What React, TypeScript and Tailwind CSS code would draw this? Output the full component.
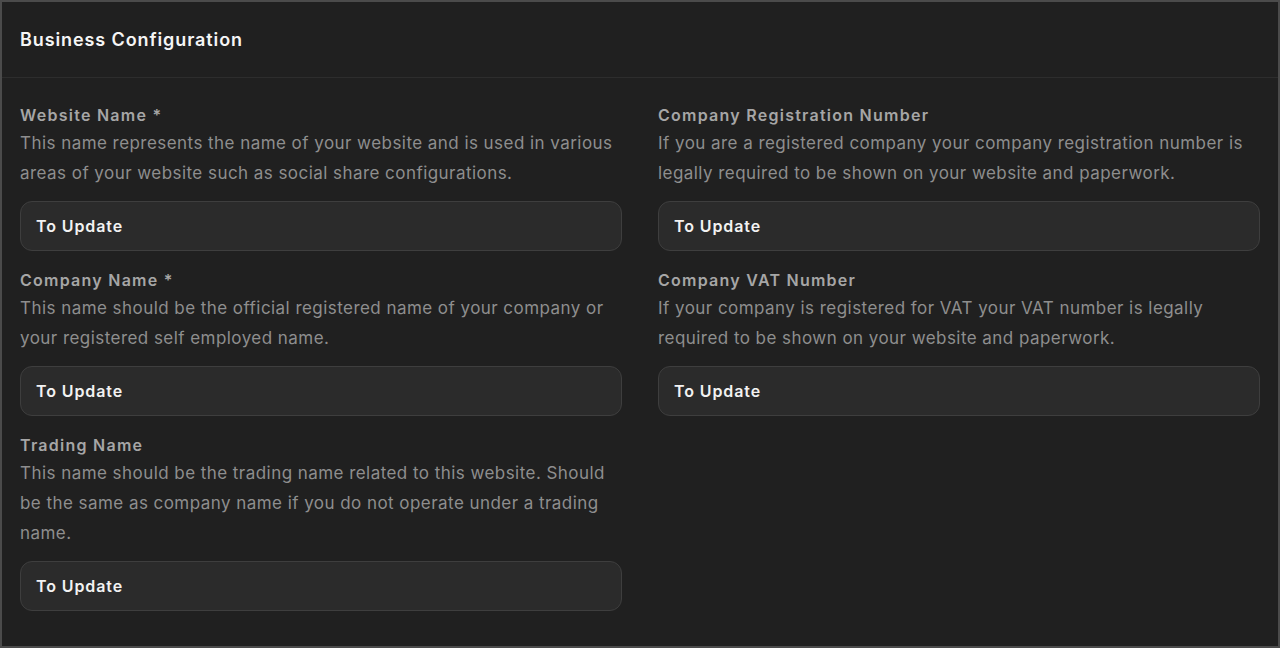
const fields = {
  left: [
    {
      label: "Website Name *",
      description:
        "This name represents the name of your website and is used in various areas of your website such as social share configurations.",
    },
    {
      label: "Company Name *",
      description:
        "This name should be the official registered name of your company or your registered self employed name.",
    },
    {
      label: "Trading Name",
      description:
        "This name should be the trading name related to this website. Should be the same as company name if you do not operate under a trading name.",
    },
  ],
  right: [
    {
      label: "Company Registration Number",
      description:
        "If you are a registered company your company registration number is legally required to be shown on your website and paperwork.",
    },
    {
      label: "Company VAT Number",
      description:
        "If your company is registered for VAT your VAT number is legally required to be shown on your website and paperwork.",
    },
  ],
};

function Field({ label, description }: { label: string; description: string }) {
  return (
    <div className="flex flex-col">
      <label className="text-[16px] leading-[26px] font-semibold tracking-[1.25px] text-[#a6a6a6]">
        {label}
      </label>
      <p className="text-[17px] leading-[30px] tracking-[0.45px] text-[#8e8e8e]">
        {description}
      </p>
      <input
        defaultValue="To Update"
        className="mt-[13px] mb-[16px] h-[50px] w-full rounded-[12px] border border-[#3e3e3e] bg-[#2b2b2b] px-[15px] text-[16px] font-semibold tracking-[0.9px] text-[#f2f2f2] outline-none"
      />
    </div>
  );
}

export default function App() {
  return (
    <div
      className="h-[648px] w-[1280px] overflow-hidden border-2 border-[#4b4b4b] bg-[#202020]"
      style={{ fontFamily: "Inter, 'Noto Sans', sans-serif" }}
    >
      <div className="flex h-[76px] items-center border-b border-[#2d2d2d] px-[18px]">
        <h2 className="text-[18px] font-semibold tracking-[0.9px] text-[#f5f5f5]">
          Business Configuration
        </h2>
      </div>
      <div className="grid grid-cols-2 gap-x-[36px] px-[18px] pt-[24px]">
        <div className="flex flex-col">
          {fields.left.map((f) => (
            <Field key={f.label} {...f} />
          ))}
        </div>
        <div className="flex flex-col">
          {fields.right.map((f) => (
            <Field key={f.label} {...f} />
          ))}
        </div>
      </div>
    </div>
  );
}
